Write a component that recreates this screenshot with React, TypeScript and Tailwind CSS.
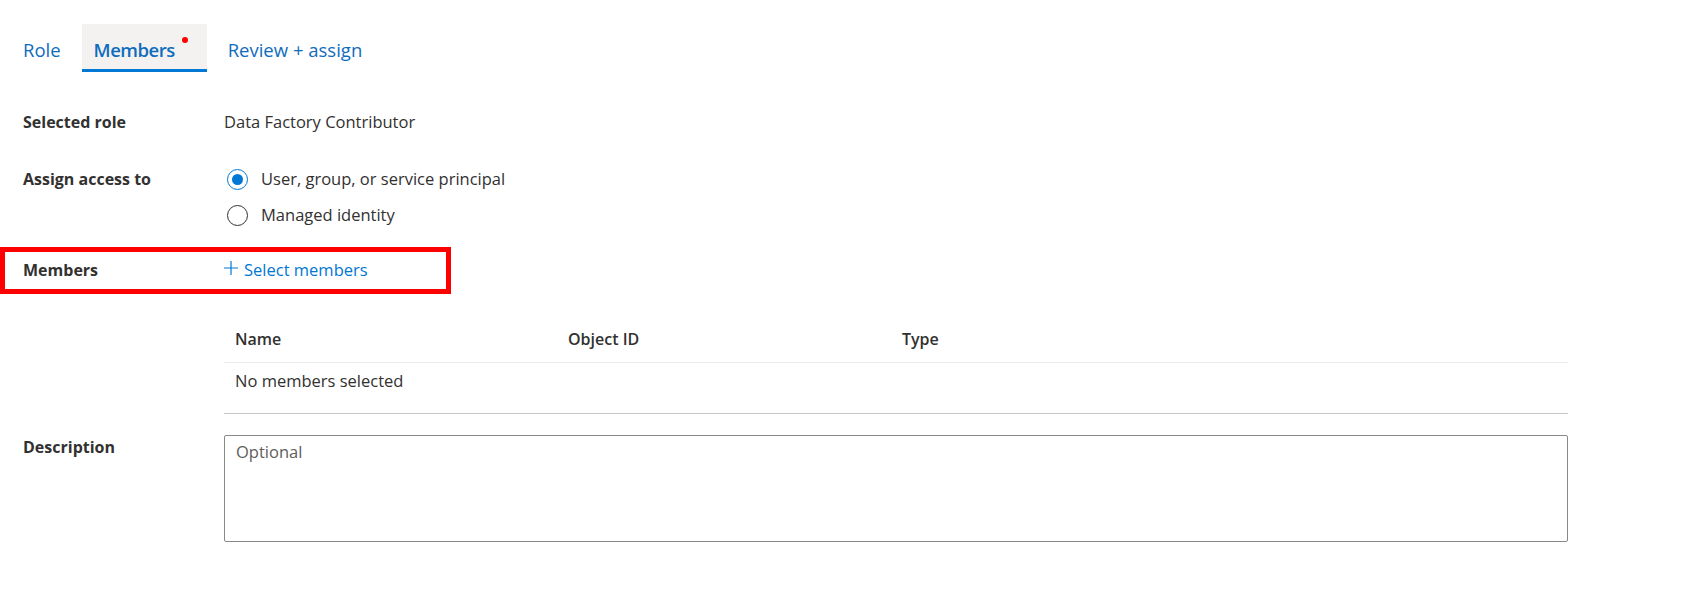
import React from 'react';

const Radio = ({ checked, label }: { checked: boolean; label: string }) => (
  <label className="flex h-[36px] items-center gap-[13px] cursor-pointer">
    <span
      className={`flex h-[21px] w-[21px] items-center justify-center rounded-full border ${
        checked ? 'border-[#0078d4]' : 'border-[#323130]'
      }`}
    >
      {checked && <span className="h-[11px] w-[11px] rounded-full bg-[#0078d4]" />}
    </span>
    <span className="text-[16.5px] text-[#323130]">{label}</span>
  </label>
);

const Row = ({ label, children, className }: { label: string; children: React.ReactNode; className?: string }) => (
  <div className={`flex ${className ?? ''}`}>
    <div className="w-[201px] shrink-0 text-[16px] font-bold text-[#323130]">{label}</div>
    <div className="flex-1">{children}</div>
  </div>
);

const App: React.FC = () => {
  const tabs = [
    { name: 'Role', active: false },
    { name: 'Members', active: true, dot: true },
    { name: 'Review + assign', active: false },
  ];

  return (
    <div
      className="relative h-[614px] w-full bg-white pt-[24px] pl-[23px] pr-[122px]"
      style={{ fontFamily: '"Open Sans", "Noto Sans", sans-serif' }}
    >
      {/* tab strip */}
      <div className="-ml-[12px] flex h-[48px] gap-[9px]">
        {tabs.map((tab) => (
          <div
            key={tab.name}
            className={`flex items-center pl-[12px] pt-[6px] text-[18.5px] text-[#0f6cbd] ${
              tab.dot ? 'pr-[19px]' : 'pr-[12px]'
            } ${
              tab.active
                ? 'border-b-[3px] border-[#0078d4] bg-[#f3f2f1] font-semibold tracking-[-0.5px]'
                : 'border-b-[3px] border-transparent'
            }`}
          >
            {tab.name}
            {tab.dot && <span className="mb-[20px] ml-[7px] h-[6px] w-[6px] rounded-full bg-[#ff0000]" />}
          </div>
        ))}
      </div>

      <Row label="Selected role" className="mt-[34px] h-[32px] items-center">
        <span className="text-[16.5px] text-[#323130]">Data Factory Contributor</span>
      </Row>

      <Row label="Assign access to" className="mt-[23px] leading-[36px]">
        <div className="ml-[3px] flex flex-col">
          <Radio checked label="User, group, or service principal" />
          <Radio checked={false} label="Managed identity" />
        </div>
      </Row>

      <Row label="Members" className="mt-[21px] h-[32px] items-center">
        <button className="flex items-center gap-[6px] text-[16.5px] text-[#0078d4]">
          <svg width="14" height="14" viewBox="0 0 14 14" className="-mt-[4px]">
            <path d="M7 0v14M0 7h14" stroke="#0078d4" strokeWidth="1.2" fill="none" />
          </svg>
          Select members
        </button>
      </Row>

      {/* members table */}
      <div className="ml-[201px] mt-[29px] text-[16px] text-[#323130]">
        <div className="grid h-[48px] grid-cols-[333px_334px_1fr] items-center border-b border-[#edebe9] font-semibold">
          <div className="px-[11px]">Name</div>
          <div className="px-[11px]">Object ID</div>
          <div className="px-[11px]">Type</div>
        </div>
        <div className="h-[51px] border-b border-[#c8c6c4] px-[11px] pt-[6px] text-[16.5px]">No members selected</div>
      </div>

      <Row label="Description" className="mt-[21px]">
        <textarea
          placeholder="Optional"
          className="block h-[107px] w-full resize-none rounded-[2px] border border-[#8a8886] px-[11px] pt-[4px] text-[16.5px] text-[#323130] outline-none placeholder:text-[#605e5c]"
        />
      </Row>

      {/* highlight annotation */}
      <div className="pointer-events-none absolute left-0 top-[247px] h-[47px] w-[451px] border-[5px] border-[#ff0000]" />
    </div>
  );
};

export default App;
